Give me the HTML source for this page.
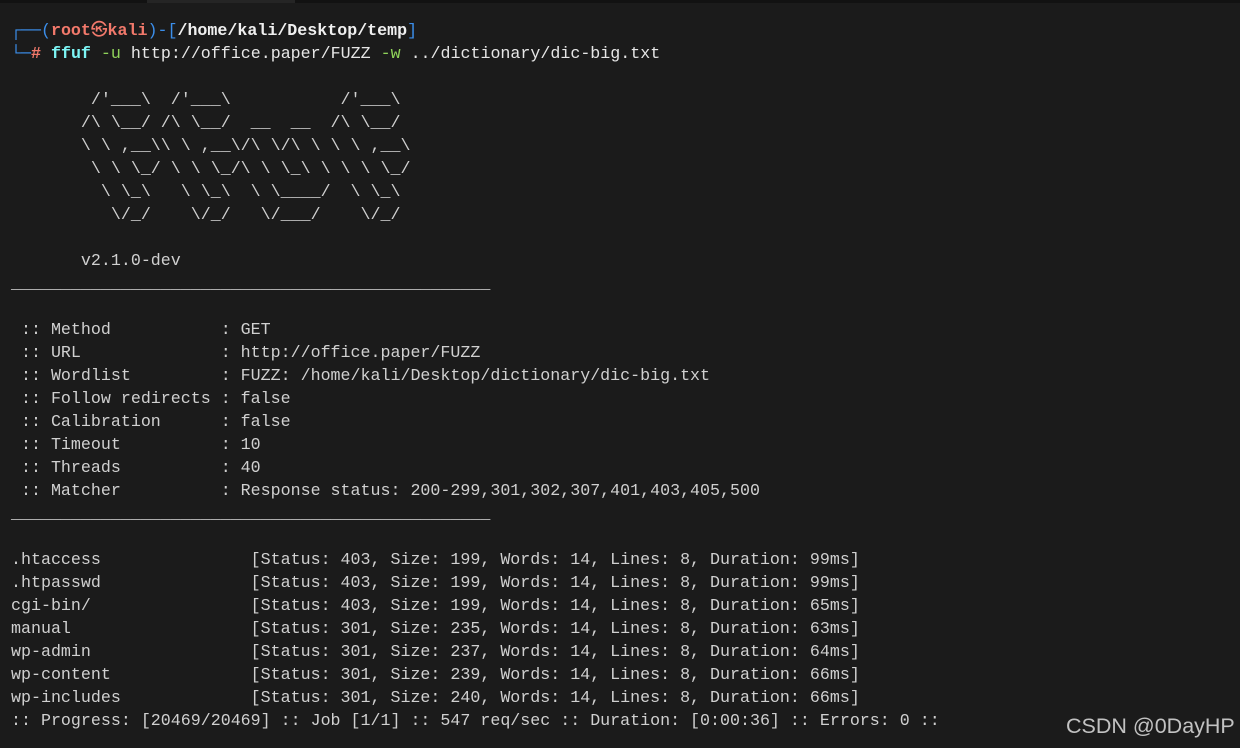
<!DOCTYPE html>
<html><head><meta charset="utf-8"><style>
html,body{margin:0;padding:0;background:#1b1b1b;width:1240px;height:748px;overflow:hidden;position:relative}
.top{position:absolute;top:0;left:0;width:1240px;height:3px;background:#121212}
.top i{position:absolute;left:147px;width:148px;height:3px;background:#252525}
pre{position:absolute;left:11px;top:19px;margin:0;font-family:"Liberation Mono","DejaVu Sans Mono","Noto Sans CJK JP",monospace;font-size:16.65px;line-height:23px;color:#d0d0d0;white-space:pre}
.b{color:#3b8eea}.r{color:#f2796b}.w{color:#f0f0f0;font-weight:bold}.c{color:#7df5f5;font-weight:bold}.g{color:#8fd35a}
.wm{position:absolute;left:1066px;top:714px;font-family:"Liberation Sans",sans-serif;font-size:21.5px;color:#c2c2c2}
</style></head><body>
<div class="top"><i></i></div>
<pre><span class="b">┌──(</span><span class="r" style="font-weight:bold">root㉿kali</span><span class="b">)-[</span><span class="w">/home/kali/Desktop/temp</span><span class="b">]</span>
<span class="b">└─</span><span class="r" style="font-weight:bold"># </span><span class="c">ffuf</span> <span class="g">-u</span> <span style="color:#e6e6e6">http://office.paper/FUZZ</span> <span class="g">-w</span> <span style="color:#e6e6e6">../dictionary/dic-big.txt</span>

        /'___\  /'___\           /'___\
       /\ \__/ /\ \__/  __  __  /\ \__/
       \ \ ,__\\ \ ,__\/\ \/\ \ \ \ ,__\
        \ \ \_/ \ \ \_/\ \ \_\ \ \ \ \_/
         \ \_\   \ \_\  \ \____/  \ \_\
          \/_/    \/_/   \/___/    \/_/

       v2.1.0-dev
________________________________________________

 :: Method           : GET
 :: URL              : http://office.paper/FUZZ
 :: Wordlist         : FUZZ: /home/kali/Desktop/dictionary/dic-big.txt
 :: Follow redirects : false
 :: Calibration      : false
 :: Timeout          : 10
 :: Threads          : 40
 :: Matcher          : Response status: 200-299,301,302,307,401,403,405,500
________________________________________________

.htaccess               [Status: 403, Size: 199, Words: 14, Lines: 8, Duration: 99ms]
.htpasswd               [Status: 403, Size: 199, Words: 14, Lines: 8, Duration: 99ms]
cgi-bin/                [Status: 403, Size: 199, Words: 14, Lines: 8, Duration: 65ms]
manual                  [Status: 301, Size: 235, Words: 14, Lines: 8, Duration: 63ms]
wp-admin                [Status: 301, Size: 237, Words: 14, Lines: 8, Duration: 64ms]
wp-content              [Status: 301, Size: 239, Words: 14, Lines: 8, Duration: 66ms]
wp-includes             [Status: 301, Size: 240, Words: 14, Lines: 8, Duration: 66ms]
:: Progress: [20469/20469] :: Job [1/1] :: 547 req/sec :: Duration: [0:00:36] :: Errors: 0 ::</pre>
<div class="wm">CSDN @0DayHP</div>
</body></html>
